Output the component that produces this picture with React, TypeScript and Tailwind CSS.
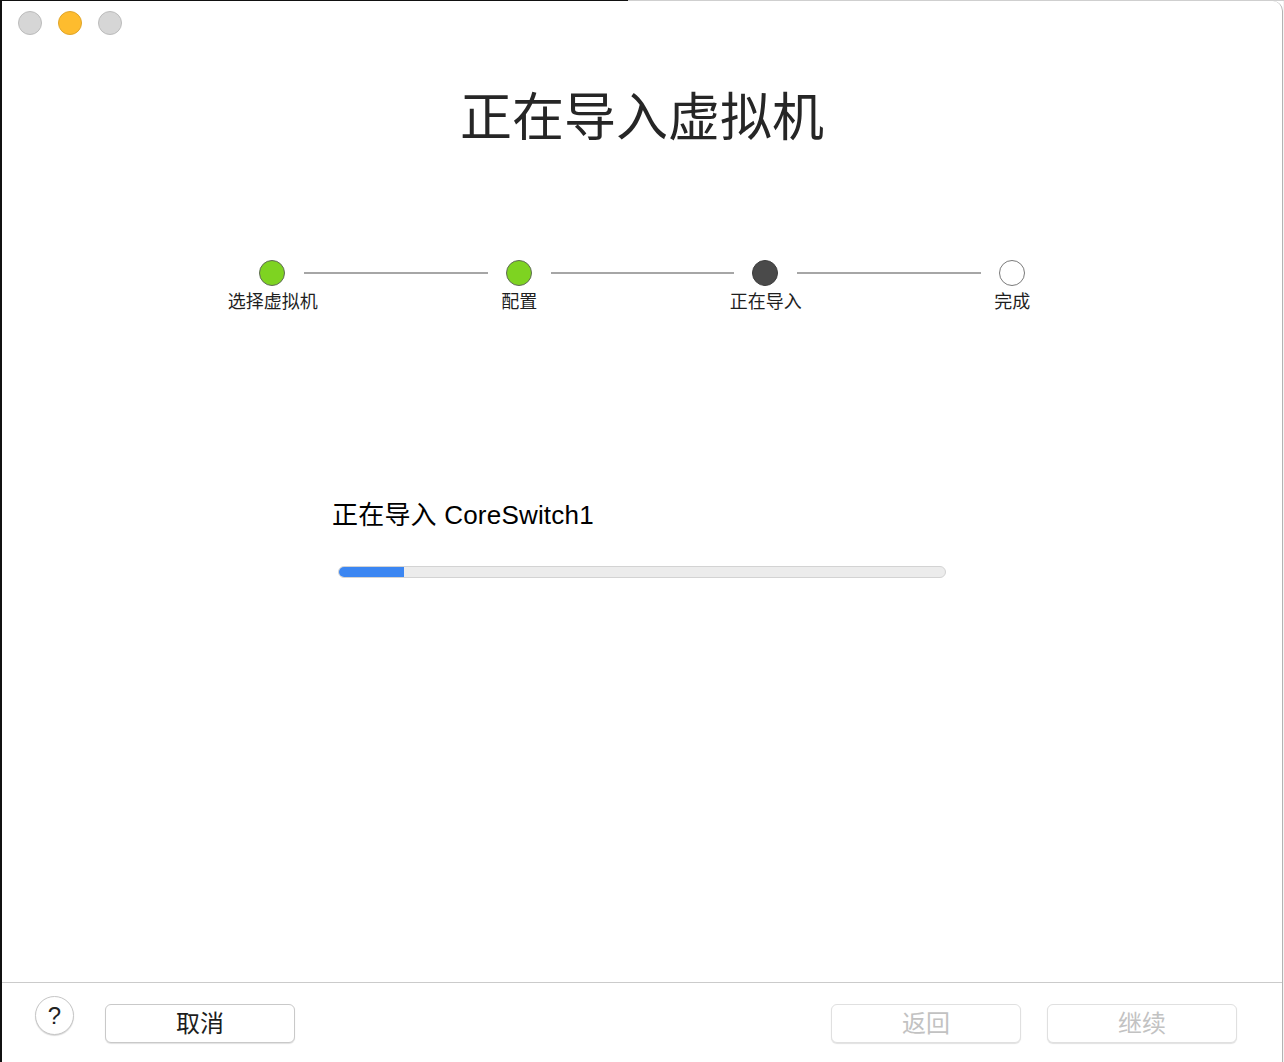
import React from 'react';

const font = { fontFamily: '"Liberation Sans", "Noto Sans CJK SC", sans-serif' };

type StepState = 'done' | 'current' | 'todo';

const steps: { label: string; state: StepState }[] = [
  { label: '选择虚拟机', state: 'done' },
  { label: '配置', state: 'done' },
  { label: '正在导入', state: 'current' },
  { label: '完成', state: 'todo' },
];

const dotClass: Record<StepState, string> = {
  done: 'bg-[#7ed321] border-[#5f6a55]',
  current: 'bg-[#4a4a4a] border-[#3c3c3c]',
  todo: 'bg-white border-[#7a7a7a]',
};

const Step: React.FC<{ label: string; state: StepState; first: boolean; last: boolean }> = ({ label, state, first, last }) => (
  <div className="flex flex-col items-center">
    <div className="flex items-center w-full h-[26px]">
      <div className={`flex-1 h-[2px] mr-[18px] ${first ? '' : 'bg-[#a6a6a6]'}`} />
      <div className={`w-[26px] h-[26px] rounded-full border ${dotClass[state]}`} />
      <div className={`flex-1 h-[2px] ml-[19px] ${last ? '' : 'bg-[#a6a6a6]'}`} />
    </div>
    <div className="mt-[7px] text-[18px] leading-[18px] text-[#1f1f1f]">{label}</div>
  </div>
);

const FooterButton: React.FC<{ children: React.ReactNode; disabled?: boolean }> = ({ children, disabled }) => (
  <button
    className={`w-[190px] h-[39px] rounded-[6px] bg-white border shadow-[0_1px_1px_rgba(0,0,0,0.12)] text-[24px] leading-none ${
      disabled ? 'text-[#c2c2c2] border-[#e0e0e0]' : 'text-[#1d1d1d] border-[#c9c9c9]'
    }`}
  >
    {children}
  </button>
);

export default function App() {
  return (
    <div className="w-[1284px] h-[1062px] flex flex-col bg-white overflow-hidden" style={font}>
      <div className="flex h-px shrink-0">
        <div className="w-[628px] bg-[#111]" />
        <div className="flex-1 bg-[#cfcfcf]" />
      </div>
      <div className="flex flex-1">
        <div className="w-[2px] bg-[#111]" />
        <div className="flex-1 flex flex-col bg-white rounded-tl-[10px] rounded-tr-[10px] border-r border-[#b3b3b3] relative">
          {/* title bar */}
          <div className="flex gap-[16px] pl-[16px] pt-[10px]">
            <div className="w-[24px] h-[24px] rounded-full bg-[#d6d6d6] border border-[#bcbcbc]" />
            <div className="w-[24px] h-[24px] rounded-full bg-[#febc2e] border border-[#e0a52a]" />
            <div className="w-[24px] h-[24px] rounded-full bg-[#d6d6d6] border border-[#bcbcbc]" />
          </div>

          <h1 className="mt-[57px] text-center text-[52px] leading-[52px] text-[#262626] font-normal">正在导入虚拟机</h1>

          <div className="mt-[116px] grid grid-cols-4 w-[987px] mx-auto pl-[1px]">
            {steps.map((s, i) => (
              <Step key={s.label} label={s.label} state={s.state} first={i === 0} last={i === steps.length - 1} />
            ))}
          </div>

          <div className="mt-[191px] w-[608px] mx-auto">
            <div className="-ml-[6px] text-[26px] leading-[26px] tracking-[0.2px] text-black">正在导入 CoreSwitch1</div>
            <div className="mt-[38px] h-[12px] rounded-full bg-[#ececec] border border-[#d3d3d3] overflow-hidden">
              <div className="h-full w-[65px] bg-[#3b86f2]" />
            </div>
          </div>

          <div className="flex-1" />

          <div className="h-[80px] shrink-0 border-t border-[#cbcbcb] flex items-start pt-[21px]">
            <button className="ml-[33px] -mt-[8px] w-[39px] h-[39px] rounded-full bg-white border border-[#c6c6c6] shadow-[0_1px_1px_rgba(0,0,0,0.15)] text-[24px] leading-none text-[#222] flex items-center justify-center">
              ?
            </button>
            <div className="ml-[31px]">
              <FooterButton>取消</FooterButton>
            </div>
            <div className="flex-1" />
            <div className="flex gap-[26px] mr-[45px]">
              <FooterButton disabled>返回</FooterButton>
              <FooterButton disabled>继续</FooterButton>
            </div>
          </div>
        </div>
        <div className="w-px bg-[#f4f4f4]" />
      </div>
    </div>
  );
}
